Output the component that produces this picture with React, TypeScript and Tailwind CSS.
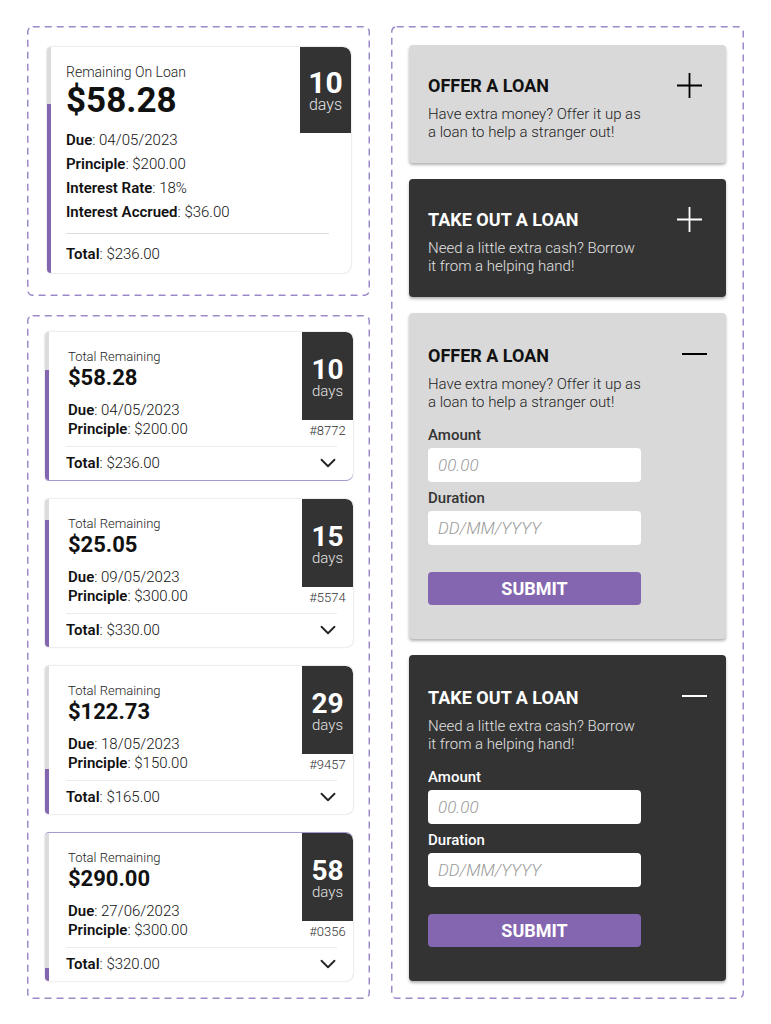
import { ChevronDown } from "lucide-react";
import clsx from "clsx";
import type { ReactNode } from "react";

type Loan = {
  remaining: string;
  due: string;
  principle: string;
  total: string;
  days: number;
  id: string;
  paid: number;
  accent?: string;
};

const loans: Loan[] = [
  { remaining: "$58.28", due: "04/05/2023", principle: "$200.00", total: "$236.00", days: 10, id: "#8772", paid: 38, accent: "shadow-[0_1px_0_#a899d0,0_0_2px_rgba(0,0,0,0.25)]" },
  { remaining: "$25.05", due: "09/05/2023", principle: "$300.00", total: "$330.00", days: 15, id: "#5574", paid: 21 },
  { remaining: "$122.73", due: "18/05/2023", principle: "$150.00", total: "$165.00", days: 29, id: "#9457", paid: 103 },
  { remaining: "$290.00", due: "27/06/2023", principle: "$300.00", total: "$320.00", days: 58, id: "#0356", paid: 135, accent: "shadow-[0_-1px_0_#a899d0,0_0_2px_rgba(0,0,0,0.25)]" },
];

const DashedBox = ({ className, children }: { className?: string; children: ReactNode }) => (
  <div className={clsx("relative", className)}>
    <svg className="pointer-events-none absolute inset-0 h-full w-full" aria-hidden>
      <rect
        x="0.75"
        y="0.75"
        rx="5"
        className="fill-none stroke-[#9d89c9] [stroke-width:1.5] [stroke-dasharray:7_5] [width:calc(100%_-_1.5px)] [height:calc(100%_-_1.5px)]"
      />
    </svg>
    {children}
  </div>
);

const ProgressStrip = ({ grayPx }: { grayPx: number }) => (
  <div className="flex w-[4px] shrink-0 flex-col">
    <div className="bg-[#dcdcdc]" style={{ height: grayPx }} />
    <div className="flex-1 bg-[#8466b0]" />
  </div>
);

const Field = ({ label, value }: { label: string; value: string }) => (
  <div>
    <span className="font-semibold">{label}</span>
    <span className="font-light">: {value}</span>
  </div>
);

const MainLoanCard = () => (
  <div className="relative flex overflow-hidden rounded-l-[4px] rounded-r-[8px] bg-white shadow-[0_0_2px_rgba(0,0,0,0.25)]">
    <ProgressStrip grayPx={57} />
    <div className="flex-1 pb-[7px] pl-[15px] pr-[22px] pt-[16px] text-[#111]">
      <div className="text-[14px] font-light leading-[18px] text-[#222]">Remaining On Loan</div>
      <div className="text-[35px] font-bold leading-[40px]">$58.28</div>
      <div className="mt-[7px] text-[15px] leading-[24px]">
        <Field label="Due" value="04/05/2023" />
        <Field label="Principle" value="$200.00" />
        <Field label="Interest Rate" value="18%" />
        <Field label="Interest Accrued" value="$36.00" />
      </div>
      <div className="mt-[9px] h-px bg-[#dddddd]" />
      <div className="mt-[8px] text-[15px] leading-[24px]">
        <Field label="Total" value="$236.00" />
      </div>
    </div>
    <div className="absolute right-0 top-0 flex h-[86px] w-[51px] flex-col items-center rounded-tr-[8px] bg-[#333333] pt-[22px] text-white">
      <div className="text-[30px] font-bold leading-[27px]">10</div>
      <div className="mt-[1px] text-[16px] font-light leading-[16px] text-[#e4e4e4]">days</div>
    </div>
  </div>
);

const LoanCard = ({ loan }: { loan: Loan }) => (
  <div
    className={clsx(
      "flex overflow-hidden rounded-l-[4px] rounded-r-[7px] bg-white",
      loan.accent ?? "shadow-[0_0_2px_rgba(0,0,0,0.25)]"
    )}
  >
    <ProgressStrip grayPx={loan.paid} />
    <div className="flex-1 pb-[7px] text-[#111]">
      <div className="flex">
        <div className="flex-1 pl-[19px] pt-[17px]">
          <div className="text-[13px] font-light leading-[16px] text-[#222]">Total Remaining</div>
          <div className="text-[22px] font-bold leading-[26px]">{loan.remaining}</div>
          <div className="mt-[10px] text-[15px] leading-[19px]">
            <Field label="Due" value={loan.due} />
            <Field label="Principle" value={loan.principle} />
          </div>
        </div>
        <div className="flex w-[51px] flex-col items-center">
          <div className="flex h-[88px] w-full flex-col items-center rounded-tr-[7px] bg-[#333333] pt-[25px] text-white">
            <div className="text-[28px] font-bold leading-[26px]">{loan.days}</div>
            <div className="text-[15px] font-light leading-[16px] text-[#e4e4e4]">days</div>
          </div>
          <div className="mt-[3px] text-[13px] font-light leading-[16px] text-[#333]">{loan.id}</div>
        </div>
      </div>
      <div className="ml-[17px] mr-[16px] mt-[7px] h-px bg-[#ececec]" />
      <div className="ml-[17px] mr-[16px] flex h-[26px] items-center justify-between pt-[6px] text-[15px] leading-[20px]">
        <Field label="Total" value={loan.total} />
        <ChevronDown size={26} strokeWidth={1.7} className="-my-[3px] -mr-[4px] text-[#222]" />
      </div>
    </div>
  </div>
);

const PlusIcon = ({ dark }: { dark: boolean }) => (
  <svg width="25" height="25" viewBox="0 0 25 25" className={clsx("mr-[24px]", dark ? "text-white" : "text-black")}>
    <path d="M12.5 0v25M0 12.5h25" stroke="currentColor" strokeWidth="1.8" />
  </svg>
);

const MinusIcon = ({ dark }: { dark: boolean }) => (
  <svg width="25" height="4" viewBox="0 0 25 4" className={clsx("mr-[19px] -mt-[4px]", dark ? "text-white" : "text-black")}>
    <path d="M0 2h25" stroke="currentColor" strokeWidth="2" />
  </svg>
);

const LoanPanel = ({
  title,
  lines,
  dark,
  open,
}: {
  title: string;
  lines: [string, string];
  dark: boolean;
  open: boolean;
}) => (
  <div
    className={clsx(
      "rounded-[4px] pl-[19px] shadow-[0_2px_3px_rgba(0,0,0,0.3)]",
      dark ? "bg-[#333333] text-white" : "bg-[#d9d9d9] text-[#111]",
      open ? "pb-[34px] pt-[31px]" : "pb-[22px] pt-[28px]"
    )}
  >
    <div className="flex items-center justify-between">
      <h2 className="text-[18px] font-bold leading-[24px]">{title}</h2>
      {open ? <MinusIcon dark={dark} /> : <PlusIcon dark={dark} />}
    </div>
    <p className={clsx("mt-[7px] text-[15px] font-light leading-[18px]", dark ? "text-[#e2e2e2]" : "text-[#222]")}>
      {lines[0]}
      <br />
      {lines[1]}
    </p>
    {open && (
      <div className="w-[213px]">
        <label className={clsx("mt-[15px] block text-[15px] font-medium leading-[18px]", dark ? "text-white" : "text-[#333]")}>
          Amount
        </label>
        <input
          placeholder="00.00"
          className="mt-[4px] block h-[34px] w-full rounded-[4px] bg-white px-[10px] text-[17px] font-light italic text-[#333] outline-none placeholder:text-[#9a9a9a]"
        />
        <label className={clsx("mt-[7px] block text-[15px] font-medium leading-[18px]", dark ? "text-white" : "text-[#333]")}>
          Duration
        </label>
        <input
          placeholder="DD/MM/YYYY"
          className="mt-[4px] block h-[34px] w-full rounded-[4px] bg-white px-[10px] text-[17px] font-light italic text-[#333] outline-none placeholder:text-[#9a9a9a]"
        />
        <button className="mt-[27px] block h-[33px] w-full rounded-[4px] bg-[#8466b0] text-[18px] font-bold text-white">
          SUBMIT
        </button>
      </div>
    )}
  </div>
);

export default function App() {
  const offer: [string, string] = ["Have extra money? Offer it up as", "a loan to help a stranger out!"];
  const take: [string, string] = ["Need a little extra cash? Borrow", "it from a helping hand!"];

  return (
    <div className="flex min-h-screen gap-[21px] bg-white pl-[27px] pt-[26px] font-['Roboto',sans-serif]">
      <div className="flex w-[343px] flex-col gap-[19px]">
        <DashedBox className="pb-[23px] pl-[20px] pr-[19px] pt-[21px]">
          <MainLoanCard />
        </DashedBox>
        <DashedBox className="flex flex-col gap-[19px] pb-[18px] pl-[18px] pr-[17px] pt-[17px]">
          {loans.map((loan) => (
            <LoanCard key={loan.id} loan={loan} />
          ))}
        </DashedBox>
      </div>
      <div className="w-[353px]">
        <DashedBox className="flex flex-col gap-[16px] px-[18px] pb-[18px] pt-[19px]">
          <LoanPanel title="OFFER A LOAN" lines={offer} dark={false} open={false} />
          <LoanPanel title="TAKE OUT A LOAN" lines={take} dark open={false} />
          <LoanPanel title="OFFER A LOAN" lines={offer} dark={false} open />
          <LoanPanel title="TAKE OUT A LOAN" lines={take} dark open />
        </DashedBox>
      </div>
    </div>
  );
}
